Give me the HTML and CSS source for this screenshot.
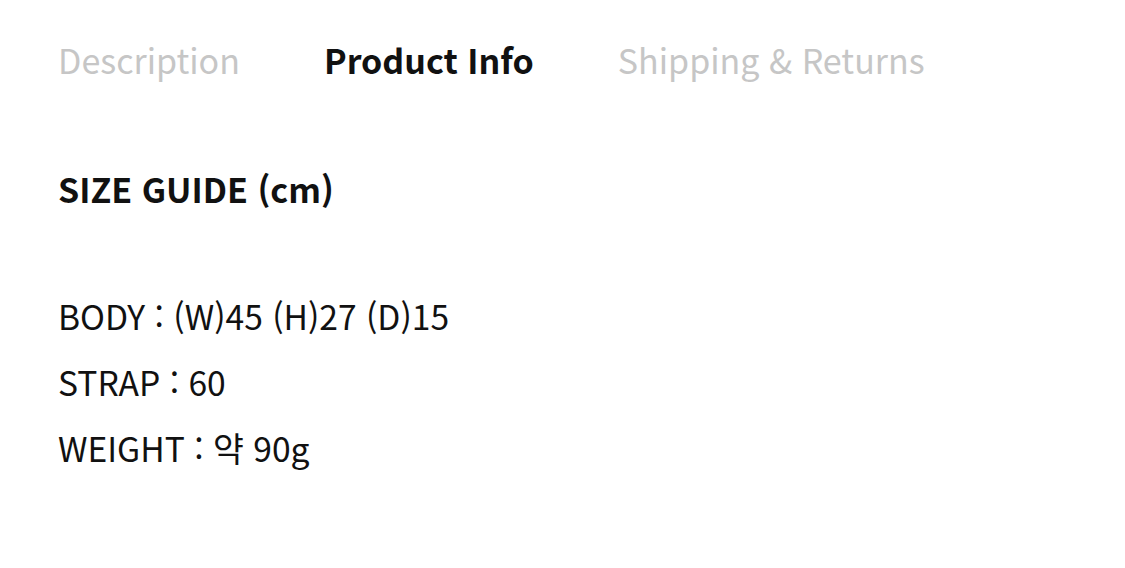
FILE: index.html
```html
<!DOCTYPE html>
<html lang="ko">
<head>
<meta charset="utf-8">
<link rel="stylesheet" href="styles.css">
</head>
<body>
<div class="page">
  <nav class="tabs">
    <span class="tab">Description</span>
    <span class="tab active">Product Info</span>
    <span class="tab">Shipping &amp; Returns</span>
  </nav>
  <section class="info">
    <h2 class="title">SIZE GUIDE (cm)</h2>
    <ul class="specs">
      <li>BODY : (W)45 (H)27 (D)15</li>
      <li>STRAP : 60</li>
      <li>WEIGHT : 약 90g</li>
    </ul>
  </section>
</div>
</body>
</html>
```
FILE: styles.css
```css
html, body {
  margin: 0;
  padding: 0;
  background: #fff;
}
body {
  font-family: "Noto Sans CJK KR", "Noto Sans", sans-serif;
  color: #111;
}
.page {
  padding: 33px 58px 0;
}
.tabs {
  display: flex;
  gap: 84px;
  font-size: 34px;
  line-height: 54px;
}
.tab {
  color: #c6c6c6;
}
.tab.active {
  color: #111;
  font-weight: 700;
}
.info {
  padding-top: 75px;
}
.title {
  margin: 0;
  font-size: 34px;
  font-weight: 700;
  line-height: 54px;
}
.specs {
  list-style: none;
  margin: 0;
  padding: 67px 0 0;
  font-size: 33.6px;
  line-height: 66px;
}
```
